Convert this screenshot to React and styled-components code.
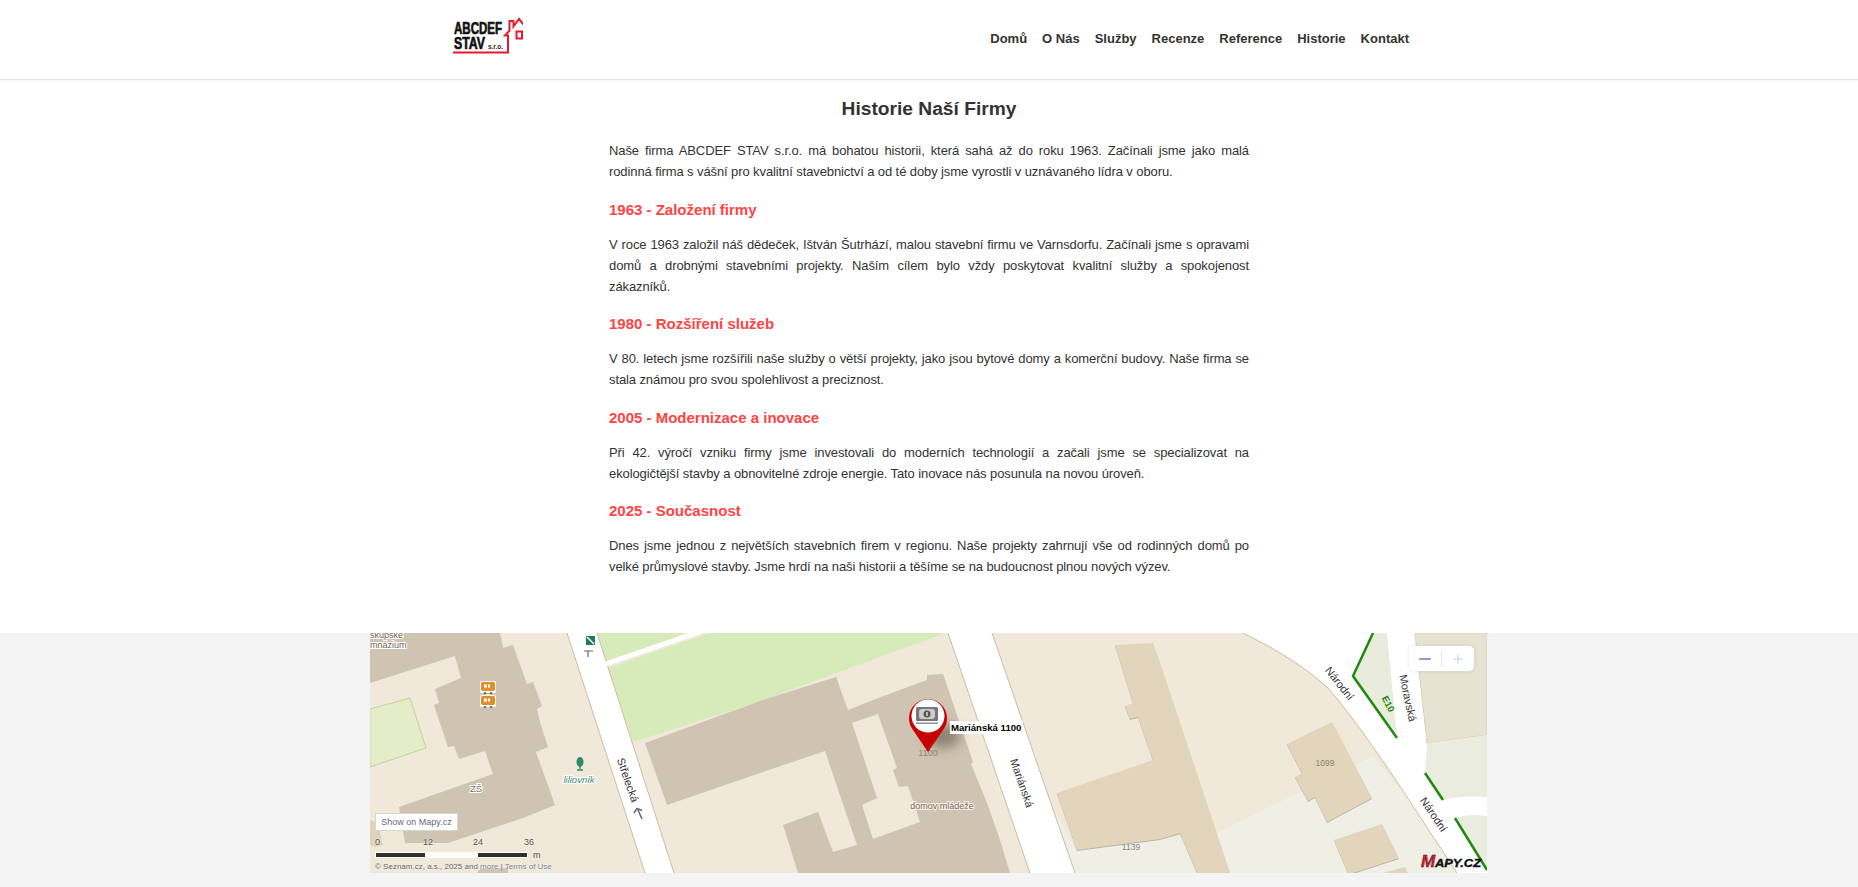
import React from 'react';
import styled, { createGlobalStyle } from 'styled-components';
import { Minus, Plus } from 'lucide-react';

const GlobalStyle = createGlobalStyle`
  html, body {
    margin: 0;
    padding: 0;
    background: #f4f4f4;
    font-family: "Liberation Sans", Arial, sans-serif;
    color: #333;
  }
  * { box-sizing: border-box; }
`;

const Page = styled.div`
  min-height: 887px;
  background: #f4f4f4;
`;

const Header = styled.header`
  height: 80px;
  background: #fff;
  border-bottom: 1px solid #e4e4e4;
  box-shadow: 0 1px 2px rgba(0, 0, 0, 0.05);
  position: relative;
`;

const HeaderInner = styled.div`
  width: 1000px;
  height: 100%;
  margin: 0 auto;
  padding: 0 20px 0 24px;
  display: flex;
  align-items: center;
  justify-content: space-between;
`;

const Nav = styled.nav`
  display: flex;
  gap: 15px;
  margin-top: -2px;
`;

const NavLink = styled.a`
  font-size: 13px;
  font-weight: 700;
  color: #333;
  text-decoration: none;
`;

const Main = styled.main`
  background: #fff;
  padding: 17px 0 56px;
`;

const Article = styled.article`
  width: 640px;
  margin: 0 auto;
`;

const Title = styled.h2`
  margin: 0 0 19px;
  font-size: 19.2px;
  line-height: 24px;
  font-weight: 700;
  text-align: center;
  color: #333;
`;

const Heading = styled.h3`
  margin: 18.5px 0 15px;
  font-size: 15px;
  line-height: 18px;
  font-weight: 700;
  color: #ff4444;
`;

const Paragraph = styled.p`
  margin: 0;
  font-size: 13px;
  line-height: 21px;
  letter-spacing: -0.1px;
  color: #333;
`;

const Line = styled.span`
  display: block;
  white-space: nowrap;
  text-align: justify;
  text-align-last: ${(p) => (p.$full ? 'justify' : 'left')};
`;

const MapRow = styled.div`
  display: flex;
  justify-content: center;
  padding-right: 1px;
`;

const MapFrame = styled.section`
  position: relative;
  width: 1117px;
  height: 240px;
  overflow: hidden;
  background: #f0e8d8;
`;

const MapCanvas = styled.svg`
  display: block;
  width: 100%;
  height: 100%;
`;

const MapText = styled.text`
  font-family: "Liberation Sans", Arial, sans-serif;
  font-size: ${(p) => p.$size || 10}px;
  font-weight: ${(p) => (p.$bold ? 700 : 400)};
  font-style: ${(p) => (p.$italic ? 'italic' : 'normal')};
  fill: ${(p) => p.$color || '#333'};
  stroke: ${(p) => p.$halo || 'none'};
  stroke-width: ${(p) => (p.$halo ? 2 : 0)}px;
  paint-order: stroke;
`;

const ZoomControl = styled.div`
  position: absolute;
  top: 13px;
  right: 13px;
  width: 65px;
  height: 25px;
  display: flex;
  align-items: center;
  background: #fff;
  border-radius: 5px;
  box-shadow: 0 0 4px rgba(0, 0, 0, 0.1);
`;

const ZoomButton = styled.span`
  flex: 1;
  display: flex;
  align-items: center;
  justify-content: center;
  color: ${(p) => (p.$off ? '#c9d4de' : '#63809c')};
`;

const ZoomDivider = styled.span`
  width: 1px;
  height: 16px;
  background: #e6e9ec;
`;

const MapBadge = styled.a`
  position: absolute;
  left: 5px;
  top: 180px;
  width: 83px;
  height: 18px;
  display: flex;
  align-items: center;
  justify-content: center;
  background: #fff;
  border: 1px solid #d5d5d5;
  font-size: 9px;
  color: #5e6c7a;
`;

const ScaleBox = styled.div`
  position: absolute;
  left: 5px;
  top: 204px;
  width: 180px;
`;

const ScaleLabels = styled.div`
  display: flex;
  height: 12px;
  font-size: 9px;
  line-height: 10px;
  color: #555;
  text-shadow: 0 0 2px #fff;
`;

const ScaleLabel = styled.span`
  flex: none;
  width: ${(p) => p.$width}px;
`;

const ScaleRow = styled.div`
  display: flex;
  align-items: center;
  height: 6px;
  margin-top: 3px;
`;

const ScaleBar = styled.div`
  width: 51px;
  height: 6px;
  background: ${(p) => (p.$dark ? '#2f2f2f' : '#fffdf6')};
  border: 1px solid #fffdf6;
`;

const ScaleUnit = styled.span`
  margin-left: 5px;
  font-size: 9px;
  color: #555;
`;

const Attribution = styled.div`
  position: absolute;
  left: 5px;
  top: 228px;
  font-size: 8px;
  line-height: 11px;
  white-space: nowrap;
  color: #666;
  text-shadow: 0 0 2px #fff;
`;

const AttributionLink = styled.span`
  color: #7b8794;
`;

const sections = [
  {
    lines: [
      { text: 'Naše firma ABCDEF STAV s.r.o. má bohatou historii, která sahá až do roku 1963. Začínali jsme jako malá', full: true },
      { text: 'rodinná firma s vášní pro kvalitní stavebnictví a od té doby jsme vyrostli v uznávaného lídra v oboru.' },
    ],
  },
  {
    title: '1963 - Založení firmy',
    lines: [
      { text: 'V roce 1963 založil náš dědeček, Ištván Šutrhází, malou stavební firmu ve Varnsdorfu. Začínali jsme s opravami', full: true },
      { text: 'domů a drobnými stavebními projekty. Naším cílem bylo vždy poskytovat kvalitní služby a spokojenost', full: true },
      { text: 'zákazníků.' },
    ],
  },
  {
    title: '1980 - Rozšíření služeb',
    lines: [
      { text: 'V 80. letech jsme rozšířili naše služby o větší projekty, jako jsou bytové domy a komerční budovy. Naše firma se', full: true },
      { text: 'stala známou pro svou spolehlivost a preciznost.' },
    ],
  },
  {
    title: '2005 - Modernizace a inovace',
    lines: [
      { text: 'Při 42. výročí vzniku firmy jsme investovali do moderních technologií a začali jsme se specializovat na', full: true },
      { text: 'ekologičtější stavby a obnovitelné zdroje energie. Tato inovace nás posunula na novou úroveň.' },
    ],
  },
  {
    title: '2025 - Současnost',
    lines: [
      { text: 'Dnes jsme jednou z největších stavebních firem v regionu. Naše projekty zahrnují vše od rodinných domů po', full: true },
      { text: 'velké průmyslové stavby. Jsme hrdí na naši historii a těšíme se na budoucnost plnou nových výzev.' },
    ],
  },
];

const Logo = () => (
  <svg width="70" height="50" viewBox="453 14.5 70 50" aria-label="ABCDEF STAV s.r.o.">
    <text x="454" y="33" fontFamily='"Liberation Sans", sans-serif' fontWeight="700" fontSize="16" textLength="48" lengthAdjust="spacingAndGlyphs" stroke="#111" strokeWidth=".7" fill="#111">ABCDEF</text>
    <text x="454" y="48" fontFamily='"Liberation Sans", sans-serif' fontWeight="700" fontSize="16" textLength="31" lengthAdjust="spacingAndGlyphs" stroke="#111" strokeWidth=".7" fill="#111">STAV</text>
    <text x="488" y="48" fontFamily='"Liberation Sans", sans-serif' fontWeight="700" fontSize="6.5" textLength="15" fill="#222">s.r.o.</text>
    <path d="M453 52H508V35H505L509.5 30V20.5H513.5V26L519 18.5L526 27" fill="none" stroke="#e8192c" strokeWidth="2" />
    <rect x="516.5" y="31" width="5.5" height="7" fill="none" stroke="#e8192c" strokeWidth="2" />
  </svg>
);

const OrangeMarker = ({ y }) => (
  <g transform={`translate(111 ${y})`}>
    <rect x="-1" y="-1" width="16" height="12" rx="2" fill="#fff" />
    <rect x="0" y="0" width="14" height="9" rx="1.5" fill="#e0902a" />
    <rect x="3" y="2.5" width="3" height="3" fill="#fff" />
    <rect x="7" y="2.5" width="2" height="3" fill="#fff" />
    <circle cx="4" cy="11" r="1.3" fill="#777" />
    <circle cx="10" cy="11" r="1.3" fill="#777" />
  </g>
);

const MapDrawing = () => (
  <MapCanvas viewBox="0 0 1117 240">
    <defs>
      <filter id="pinShadow" x="-60%" y="-60%" width="220%" height="220%">
        <feGaussianBlur stdDeviation="6" />
      </filter>
      <filter id="buildingShadow" x="-5%" y="-5%" width="110%" height="110%">
        <feDropShadow dx="0" dy="1" stdDeviation=".4" floodColor="#9b9b8f" floodOpacity=".7" />
      </filter>
    </defs>

    <rect width="1117" height="240" fill="#f0e8d8" />
    <polygon points="681,172 707,217 848,199 930,159 1003,123 1037,164 1087,240 705,240" fill="#efefe5" />

    {/* grass */}
    <polygon points="227,0 317,0 236,28" fill="#d6eaba" />
    <polygon points="238,35 340,0 575,0 390,68 263,109" fill="#d6eaba" />

    {/* left school building */}
    <polygon
      fill="#cfc3b2"
      points="0,50 85,23 91,45 65,56 69,70 64,72 78,114 84,113 89,126 115,118 123,141 29,174 35,210 78,210 153,185 185,172 166,119 178,114 170,89 167,76 172,73 163,49 157,51 143,12 133,15 130,0 0,0"
    />
    <polygon points="0,76 40,65 56,115 0,134" fill="#e4edc8" stroke="#c2d39a" strokeWidth="1" />
    <polygon points="0,187 8,190 13,212 5,214 0,212" fill="#e0d3b9" />
    <polygon points="107,240 138,240 138,235 110,236" fill="#cfc3b2" />

    {/* centre building */}
    <polygon
      fill="#cfc3b2"
      points="275,110 390,68 466,44 478,77 503,67 557,47 557,42 573,41 603,129 601,131 617,170 630,207 640,240 428,240 413,192 448,179 463,219 487,212 455,118 390,140 297,172"
    />
    <polygon points="482,90 508,81 527,135 523,137 529,154 538,153 550,189 503,206 492,172 507,165" fill="#f0e8d8" />

    {/* right beige buildings */}
    <polygon
      fill="#e2d5bc"
      filter="url(#buildingShadow)"
      points="745,12 783,10 790,30 860,240 827,240 810,200 790,206 707,217 687,160 783,127 768,84 760,86 755,73 763,70"
    />
    <polygon fill="#e2d5bc" filter="url(#buildingShadow)" points="917,111 962,89 1002,165 957,189 945,164 938,168 925,144 932,140" />
    <polygon fill="#e2d5bc" filter="url(#buildingShadow)" points="964,207 1012,191 1029,225 983,240 978,240" />
    <polygon fill="#e2d5bc" points="1013,240 1035,234 1038,240" />

    {/* streets */}
    <polygon points="197,0 227,0 304,240 275,240" fill="#fff" />
    <line x1="197" y1="0" x2="275" y2="240" stroke="#c9bfa5" />
    <line x1="227" y1="0" x2="304" y2="240" stroke="#c9bfa5" />
    <polygon points="578,0 622,0 705,240 660,240" fill="#fff" />
    <line x1="578" y1="0" x2="660" y2="240" stroke="#c9bfa5" />
    <line x1="622" y1="0" x2="705" y2="240" stroke="#c9bfa5" />
    <line x1="236" y1="31" x2="335" y2="-3" stroke="#fff" strokeWidth="5" />

    <path d="M873 0Q925 25 957 54Q985 85 1037 164L1087 240H1117V0Z" fill="#fff" />
    <path d="M873 0Q925 25 957 54Q985 85 1037 164L1087 240" fill="none" stroke="#c9bfa5" />

    <polygon points="1003,0 983,43 1027,105 1017,0" fill="#e9ebdd" />
    <polyline points="1003,0 983,43 1027,105" fill="none" stroke="#1f8a0e" strokeWidth="2.5" />
    <polygon points="1045,0 1117,0 1117,102 1057,110" fill="#e6e3d2" stroke="#d6cfb6" />
    <path d="M1057 110L1117 102V164Q1090 162 1073 167L1055 140Z" fill="#eaecdf" />
    <polyline points="1055,140 1073,167" fill="none" stroke="#1f8a0e" strokeWidth="2.5" />
    <path d="M1085 185Q1100 180 1117 183V237Z" fill="#eaecdf" />
    <polyline points="1085,185 1117,237" fill="none" stroke="#1f8a0e" strokeWidth="2.5" />

    {/* labels */}
    <MapText x="0" y="5" $size="9" $color="#6e6358" $halo="#fff">skupské</MapText>
    <MapText x="0" y="15" $size="9" $color="#6e6358" $halo="#fff">mnázium</MapText>
    <MapText x="106" y="159" $size="9.5" $color="#7a6d5e" $halo="#fff" textAnchor="middle">ZŠ</MapText>
    <MapText x="258" y="151" $size="11" textAnchor="middle" transform="rotate(71 258 147)">Střelecká</MapText>
    <MapText x="652" y="154" $size="11" textAnchor="middle" transform="rotate(71 652 150)">Mariánská</MapText>
    <MapText x="572" y="176" $size="9" $color="#7d6b5c" $halo="#f4efe6" textAnchor="middle">domov mládeže</MapText>
    <MapText x="558" y="123" $size="9" $color="#958a7c" textAnchor="middle">1100</MapText>
    <MapText x="761" y="217" $size="8.5" $color="#8a8a82" textAnchor="middle">1139</MapText>
    <MapText x="955" y="133" $size="8.5" $color="#8a8375" textAnchor="middle">1099</MapText>
    <MapText x="969" y="54" $size="11" textAnchor="middle" transform="rotate(52 969 51)">Národní</MapText>
    <MapText x="1063" y="185" $size="11" textAnchor="middle" transform="rotate(56 1063 182)">Národní</MapText>
    <MapText x="1038" y="69" $size="11" textAnchor="middle" transform="rotate(78 1038 65)">Moravská</MapText>
    <MapText x="1018" y="74" $size="9.5" $bold $color="#1f8a0e" textAnchor="middle" transform="rotate(62 1018 71)">E10</MapText>
    <MapText x="209" y="150" $size="9.5" $italic $color="#3f8d77" $halo="#fff" textAnchor="middle">liliovník</MapText>

    {/* small pictograms */}
    <rect x="216" y="3" width="9" height="9" fill="#1f7a5c" />
    <path d="M217 4L224 11" stroke="#fff" strokeWidth="1.5" />
    <path d="M214 18H223M218 18V24" stroke="#666" strokeWidth="1.2" fill="none" />
    <path d="M272 186L268 177M264 180L267 175.5L272 177.5" stroke="#666" strokeWidth="1.5" fill="none" />
    <ellipse cx="210" cy="129" rx="3.5" ry="5" fill="#2d8a6a" />
    <path d="M210 133V136M207 137H213" stroke="#2d8a6a" strokeWidth="1.4" />
    <OrangeMarker y={49} />
    <OrangeMarker y={63} />

    {/* address pin */}
    <ellipse cx="573" cy="103" rx="17" ry="12" fill="#4a4238" opacity=".5" filter="url(#pinShadow)" />
    <path d="M558 119L543 97A19 19 0 1 1 573 97Z" fill="#c80000" />
    <circle cx="558" cy="83" r="16.5" fill="#fff" />
    <rect x="546" y="74" width="22" height="14" rx="1.5" fill="#777" />
    <rect x="549" y="76" width="16" height="10" rx="3" fill="#ccc" />
    <circle cx="557" cy="81" r="3.5" fill="#555" />
    <rect x="556.4" y="79" width="1.2" height="4" fill="#fff" />
    <rect x="546" y="89.5" width="22" height="1.4" fill="#888" />
    <rect x="580" y="88" width="73" height="13" fill="#fff" />
    <MapText x="581" y="98" $size="9.6" $bold $color="#000">Mariánská 1100</MapText>

    {/* mapy logo */}
    <g transform="translate(1051 234)">
      <text fontFamily='"Liberation Sans", sans-serif' fontWeight="700" fontStyle="italic" fontSize="17" fill="#e3202c" stroke="#111" strokeWidth=".4">M</text>
      <text x="14" fontFamily='"Liberation Sans", sans-serif' fontWeight="700" fontStyle="italic" fontSize="11" textLength="46" lengthAdjust="spacingAndGlyphs" fill="#111" stroke="#111" strokeWidth=".4">APY.CZ</text>
    </g>
  </MapCanvas>
);

const App = () => (
  <Page>
    <GlobalStyle />
    <Header>
      <HeaderInner>
        <Logo />
        <Nav>
          {['Domů', 'O Nás', 'Služby', 'Recenze', 'Reference', 'Historie', 'Kontakt'].map((item) => (
            <NavLink key={item}>{item}</NavLink>
          ))}
        </Nav>
      </HeaderInner>
    </Header>
    <Main>
      <Article>
        <Title>Historie Naší Firmy</Title>
        {sections.map((section, i) => (
          <React.Fragment key={i}>
            {section.title && <Heading>{section.title}</Heading>}
            <Paragraph>
              {section.lines.map((line) => (
                <Line key={line.text} $full={line.full}>{line.text}</Line>
              ))}
            </Paragraph>
          </React.Fragment>
        ))}
      </Article>
    </Main>
    <MapRow>
      <MapFrame>
        <MapDrawing />
        <ZoomControl>
          <ZoomButton><Minus size={18} strokeWidth={2} /></ZoomButton>
          <ZoomDivider />
          <ZoomButton $off><Plus size={14} strokeWidth={2} /></ZoomButton>
        </ZoomControl>
        <MapBadge>Show on Mapy.cz</MapBadge>
        <ScaleBox>
          <ScaleLabels>
            <ScaleLabel $width={48}>0</ScaleLabel>
            <ScaleLabel $width={50}>12</ScaleLabel>
            <ScaleLabel $width={51}>24</ScaleLabel>
            <ScaleLabel $width={20}>36</ScaleLabel>
          </ScaleLabels>
          <ScaleRow>
            <ScaleBar $dark />
            <ScaleBar />
            <ScaleBar $dark />
            <ScaleUnit>m</ScaleUnit>
          </ScaleRow>
        </ScaleBox>
        <Attribution>
          © Seznam.cz, a.s., 2025 and <AttributionLink>more</AttributionLink> | <AttributionLink>Terms of Use</AttributionLink>
        </Attribution>
      </MapFrame>
    </MapRow>
  </Page>
);

export default App;
